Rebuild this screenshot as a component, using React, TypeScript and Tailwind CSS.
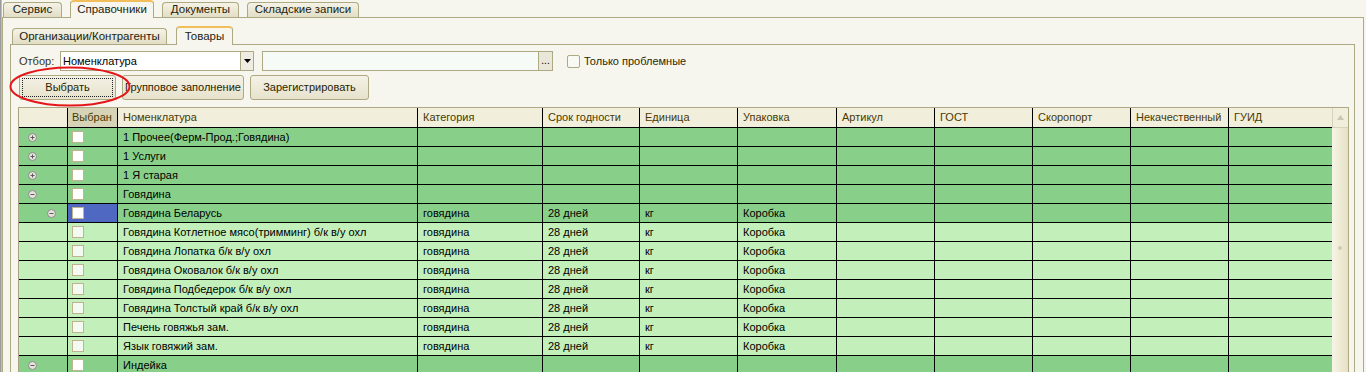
import React from 'react';

type Row = {
    name: string;
    level: 0 | 1 | 2;
    icon?: 'plus' | 'minus';
    group: boolean;
    filled?: boolean;
    selected?: boolean;
};

const rows: Row[] = [
    { name: '1 Прочее(Ферм-Прод.;Говядина)', level: 0, icon: 'plus', group: true },
    { name: '1 Услуги', level: 0, icon: 'plus', group: true },
    { name: '1 Я старая', level: 0, icon: 'plus', group: true },
    { name: 'Говядина', level: 0, icon: 'minus', group: true },
    { name: 'Говядина Беларусь', level: 1, icon: 'minus', group: true, filled: true, selected: true },
    { name: 'Говядина Котлетное мясо(тримминг) б/к в/у охл', level: 2, group: false, filled: true },
    { name: 'Говядина Лопатка б/к в/у охл', level: 2, group: false, filled: true },
    { name: 'Говядина Оковалок б/к в/у охл', level: 2, group: false, filled: true },
    { name: 'Говядина Подбедерок б/к в/у охл', level: 2, group: false, filled: true },
    { name: 'Говядина Толстый край б/к в/у охл', level: 2, group: false, filled: true },
    { name: 'Печень говяжья зам.', level: 2, group: false, filled: true },
    { name: 'Язык говяжий зам.', level: 2, group: false, filled: true },
    { name: 'Индейка', level: 0, icon: 'minus', group: true },
];

const headers = ['Категория', 'Срок годности', 'Единица', 'Упаковка', 'Артикул', 'ГОСТ', 'Скоропорт', 'Некачественный', 'ГУИД'];

const gridCols = 'grid grid-cols-[49px_50px_300px_125px_97px_98px_99px_98px_98px_98px_98px_103px]';

const TreeIcon = ({ minus }: { minus?: boolean }) => (
    <svg width="9" height="9" viewBox="0 0 9 9">
        <circle cx="4.5" cy="4.5" r="4" fill="#E4E4DA" stroke="#8A8A8A" />
        <path d="M2.5 4.5h4" stroke="#5A5A5A" />
        {!minus && <path d="M4.5 2.5v4" stroke="#5A5A5A" />}
    </svg>
);

const Tab = ({ label, width, active, small }: { label: string; width: string; active?: boolean; small?: boolean }) => {
    if (active) {
        return (
            <div className={`${width} ${small ? 'h-[19px]' : 'h-[18px]'} -mb-[1px] relative z-10 border border-b-0 border-[#ADA982] border-t-2 border-t-[#F2BE5C] rounded-t-[4px] bg-[#F7F6EE] flex items-center justify-center text-[11.5px] text-[#1E1E10]`}>
                {label}
            </div>
        );
    }
    return (
        <div className={`${width} ${small ? 'h-[16px]' : 'h-[15px]'} border border-b-0 border-[#ADA982] rounded-t-[4px] bg-linear-to-b from-[#F5F3E7] to-[#E2DEC5] flex items-center justify-center text-[11.5px] text-[#1E1E10]`}>
            {label}
        </div>
    );
};

const Button = ({ label, width, focused }: { label: string; width: string; focused?: boolean }) => (
    <div className={`${width} h-[25px] border border-[#ADA982] rounded-[3px] bg-linear-to-b from-[#F4F2E6] to-[#E6E2CC] p-[2px] overflow-hidden`}>
        <div className={`h-full flex items-center justify-center whitespace-nowrap text-[#2A2400] ${focused ? 'border border-dotted border-[#222]' : ''}`}>
            {label}
        </div>
    </div>
);

export default function App() {
    return (
        <div className="w-[1366px] h-[372px] overflow-hidden bg-[#F7F6EE] flex relative text-[11px] font-['Liberation_Sans',Arial,sans-serif]">
            <div className="w-[2px] h-full bg-linear-to-r from-[#8C8C8C] to-[#CFCFCF]" />

            <div className="flex-1 flex flex-col">
                {/* top tabs */}
                <div className="flex items-end h-[17px] gap-[8px] pl-[1px]">
                    <Tab label="Сервис" width="w-[59px]" />
                    <Tab label="Справочники" width="w-[84px]" active />
                    <Tab label="Документы" width="w-[77px]" />
                    <Tab label="Складские записи" width="w-[112px]" />
                </div>

                <div className="flex-1 flex flex-col border border-b-0 border-[#ADA982] mr-[2px] pl-[7px] pr-[8px] pt-[8px]">
                    {/* inner tabs */}
                    <div className="flex items-end h-[18px] gap-[9px] pl-[2px]">
                        <Tab label="Организации/Контрагенты" width="w-[155px]" small />
                        <Tab label="Товары" width="w-[57px]" active small />
                    </div>

                    <div className="flex-1 flex flex-col border border-b-0 border-[#ADA982] pl-[7px] pr-[5px] pt-[6px]">
                        {/* filter row */}
                        <div className="flex items-center h-[20px]">
                            <span className="w-[42px] pl-[1px] text-[#3A3210]">Отбор:</span>
                            <div className="w-[194px] h-[20px] border border-[#ADA982] bg-white flex">
                                <span className="flex-1 pl-[2px] leading-[18px] text-black">Номенклатура</span>
                                <div className="w-[13px] border-l border-[#ADA982] bg-[#EFEDE1] flex items-center justify-center">
                                    <svg width="7" height="4" viewBox="0 0 7 4"><path d="M0 0h7L3.5 4z" fill="#000" /></svg>
                                </div>
                            </div>
                            <div className="ml-[8px] w-[291px] h-[20px] border border-[#ADA982] bg-[#F6FBF7] flex">
                                <span className="flex-1" />
                                <div className="w-[14px] border-l border-[#ADA982] bg-[#E9E7DA] flex items-end justify-center pb-[4px] text-[10px] leading-none text-black">...</div>
                            </div>
                            <div className="ml-[14px] w-[13px] h-[13px] border border-[#ADA982] rounded-[2px] bg-[#F9F9F3]" />
                            <span className="ml-[4px] text-[#2E2800]">Только проблемные</span>
                        </div>

                        {/* buttons */}
                        <div className="flex gap-[6px] mt-[4px] pl-[1px]">
                            <Button label="Выбрать" width="w-[97px]" focused />
                            <Button label="Групповое заполнение" width="w-[122px]" />
                            <Button label="Зарегистрировать" width="w-[119px]" />
                        </div>

                        {/* table */}
                        <div className="flex mt-[7px] border-t border-[#ADA982] w-max">
                            <div className="border-l border-[#A5A181]">
                                <div className={`${gridCols} bg-[#F1EFDC] text-[#4A3A00]`}>
                                    <div className="h-[20px] border-r border-b border-black" />
                                    <div className="h-[20px] border-r border-b border-black bg-[#D6D3B7] pl-[4px] leading-[19px]">Выбран</div>
                                    <div className="h-[20px] border-r border-b border-black pl-[5px] leading-[19px]">Номенклатура</div>
                                    {headers.map((h, i) => (
                                        <div
                                            key={h}
                                            className={`h-[20px] border-b border-black pl-[5px] leading-[19px] whitespace-nowrap overflow-hidden ${i < headers.length - 1 ? 'border-r' : ''}`}
                                        >
                                            {h}
                                        </div>
                                    ))}
                                </div>

                                {rows.map((r) => {
                                    const bg = r.group ? 'bg-[#88D08A]' : 'bg-[#C2EFBA]';
                                    const vals = r.filled
                                        ? ['говядина', '28 дней', 'кг', 'Коробка', '', '', '', '', '']
                                        : ['', '', '', '', '', '', '', '', ''];
                                    return (
                                        <div key={r.name} className={`${gridCols} ${bg} text-black`}>
                                            <div className={`h-[19px] border-r border-b border-black flex items-center ${r.level === 1 ? 'pl-[28px]' : 'pl-[9px]'}`}>
                                                {r.icon && <TreeIcon minus={r.icon === 'minus'} />}
                                            </div>
                                            <div className={`h-[19px] border-r border-b border-black flex items-center pl-[4px] ${r.selected ? 'bg-[#4F69C3]' : ''}`}>
                                                <div className={`w-[12px] h-[12px] border border-[#C0B48F] ${r.group ? 'bg-white' : 'bg-[#F4F9F1]'}`} />
                                            </div>
                                            <div className="h-[19px] border-r border-b border-black pl-[5px] leading-[18px] whitespace-nowrap overflow-hidden">
                                                {r.name}
                                            </div>
                                            {vals.map((v, i) => (
                                                <div
                                                    key={i}
                                                    className={`h-[19px] border-b border-black pl-[5px] leading-[18px] whitespace-nowrap overflow-hidden ${i < vals.length - 1 ? 'border-r' : ''}`}
                                                >
                                                    {v}
                                                </div>
                                            ))}
                                        </div>
                                    );
                                })}
                            </div>

                            {/* scrollbar */}
                            <div className="w-[17px] border-r border-[#ADA982] flex flex-col">
                                <div className="h-[20px] bg-[#F1EFDC] border-b border-l border-[#D8D4BC] flex items-center justify-center">
                                    <svg width="7" height="5" viewBox="0 0 7 5"><path d="M3.5 0L7 5H0z" fill="#C9C6B2" /></svg>
                                </div>
                                <div className="flex-1 bg-linear-to-r from-[#F6F4E6] to-[#E6E1C4] flex justify-center pt-[118px]">
                                    <div className="w-[4px] h-[4px] rounded-full bg-[#CFCBB4]" />
                                </div>
                            </div>
                        </div>
                    </div>
                </div>
            </div>

            {/* red ellipse annotation */}
            <svg className="absolute left-[9px] top-[66px]" width="124" height="42" viewBox="0 0 124 42">
                <ellipse cx="61" cy="20.5" rx="59.5" ry="19" fill="none" stroke="#E4161A" strokeWidth="2" />
            </svg>
        </div>
    );
}
